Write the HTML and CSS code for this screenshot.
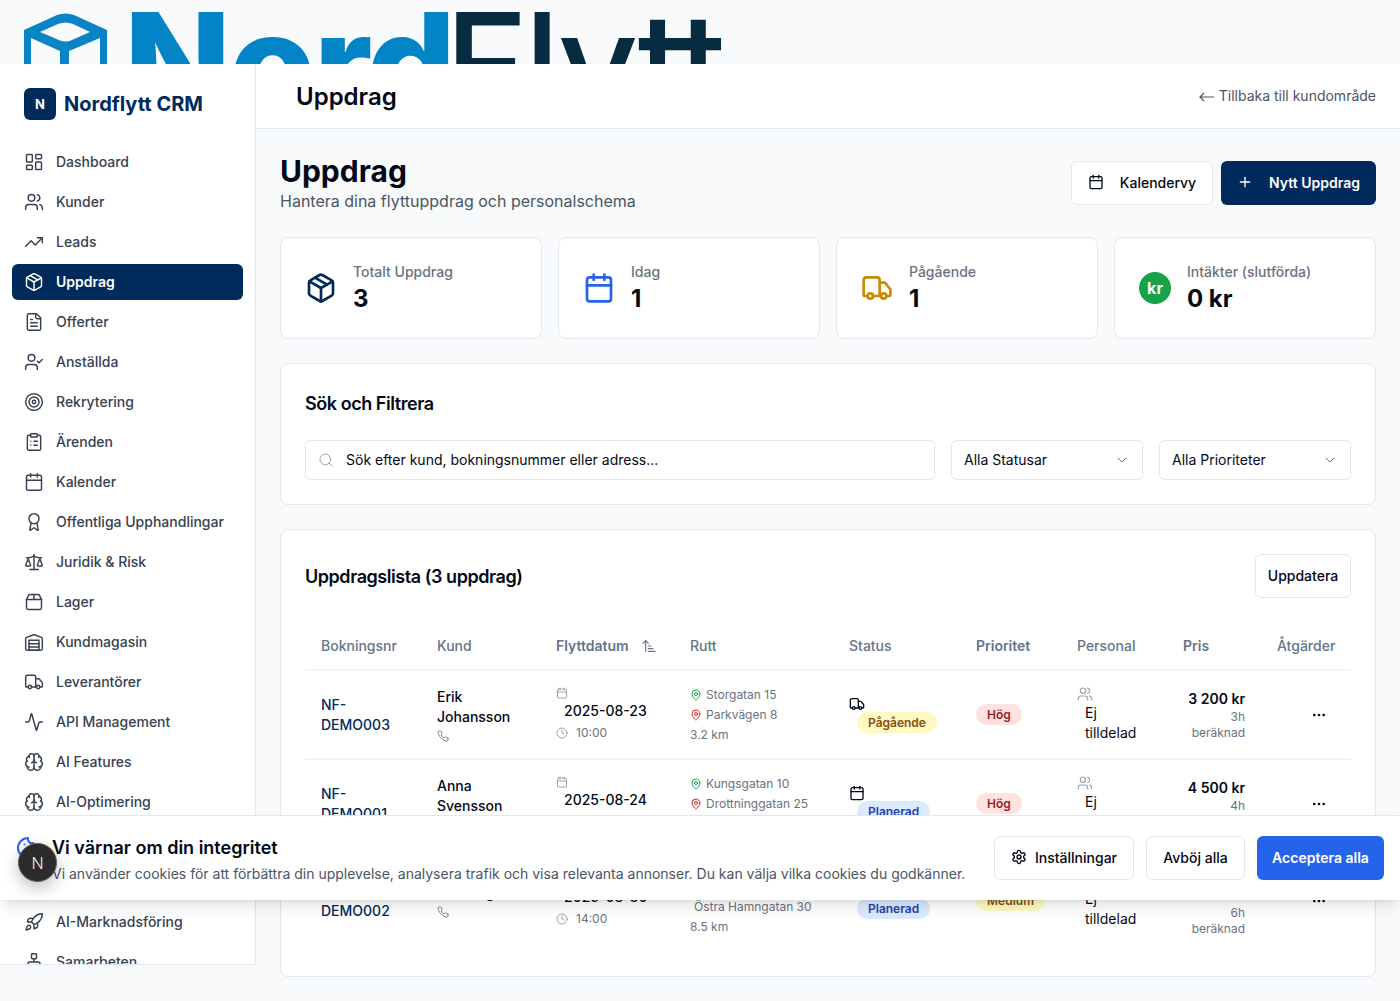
FILE: index.html
```html
<!DOCTYPE html>
<html lang="sv">
<head>
    <meta charset="UTF-8">
    <meta name="viewport" content="width=device-width, initial-scale=1.0">
    <title>Uppdrag - Nordflytt CRM</title>
    <link rel="stylesheet" href="styles.css">
</head>
<body>
    <svg class="sprite" xmlns="http://www.w3.org/2000/svg">
        <symbol id="i-dashboard" viewBox="0 0 24 24"><rect x="3" y="3" width="7" height="9" rx="1"/><rect x="14" y="3" width="7" height="5" rx="1"/><rect x="14" y="12" width="7" height="9" rx="1"/><rect x="3" y="16" width="7" height="5" rx="1"/></symbol>
        <symbol id="i-users" viewBox="0 0 24 24"><path d="M16 21v-2a4 4 0 0 0-4-4H6a4 4 0 0 0-4 4v2"/><circle cx="9" cy="7" r="4"/><path d="M22 21v-2a4 4 0 0 0-3-3.87"/><path d="M16 3.13a4 4 0 0 1 0 7.75"/></symbol>
        <symbol id="i-trend" viewBox="0 0 24 24"><polyline points="22 7 13.5 15.5 8.5 10.5 2 17"/><polyline points="16 7 22 7 22 13"/></symbol>
        <symbol id="i-package" viewBox="0 0 24 24"><path d="m7.5 4.27 9 5.15"/><path d="M21 8a2 2 0 0 0-1-1.73l-7-4a2 2 0 0 0-2 0l-7 4A2 2 0 0 0 3 8v8a2 2 0 0 0 1 1.73l7 4a2 2 0 0 0 2 0l7-4A2 2 0 0 0 21 16Z"/><path d="m3.3 7 8.7 5 8.7-5"/><path d="M12 22V12"/></symbol>
        <symbol id="i-file" viewBox="0 0 24 24"><path d="M15 2H6a2 2 0 0 0-2 2v16a2 2 0 0 0 2 2h12a2 2 0 0 0 2-2V7Z"/><path d="M14 2v4a2 2 0 0 0 2 2h4"/><path d="M10 9H8"/><path d="M16 13H8"/><path d="M16 17H8"/></symbol>
        <symbol id="i-usercheck" viewBox="0 0 24 24"><path d="M16 21v-2a4 4 0 0 0-4-4H6a4 4 0 0 0-4 4v2"/><circle cx="9" cy="7" r="4"/><polyline points="16 11 18 13 22 9"/></symbol>
        <symbol id="i-target" viewBox="0 0 24 24"><circle cx="12" cy="12" r="10"/><circle cx="12" cy="12" r="6"/><circle cx="12" cy="12" r="2"/></symbol>
        <symbol id="i-clipboard" viewBox="0 0 24 24"><rect x="8" y="2" width="8" height="4" rx="1"/><path d="M16 4h2a2 2 0 0 1 2 2v14a2 2 0 0 1-2 2H6a2 2 0 0 1-2-2V6a2 2 0 0 1 2-2h2"/><path d="M12 11h4"/><path d="M12 16h4"/><path d="M8 11h.01"/><path d="M8 16h.01"/></symbol>
        <symbol id="i-calendar" viewBox="0 0 24 24"><path d="M8 2v4"/><path d="M16 2v4"/><rect x="3" y="4" width="18" height="18" rx="2"/><path d="M3 10h18"/></symbol>
        <symbol id="i-award" viewBox="0 0 24 24"><path d="m15.477 12.89 1.515 8.526a.5.5 0 0 1-.81.47l-3.58-2.687a1 1 0 0 0-1.197 0l-3.586 2.686a.5.5 0 0 1-.81-.469l1.514-8.526"/><circle cx="12" cy="8" r="6"/></symbol>
        <symbol id="i-scale" viewBox="0 0 24 24"><path d="m16 16 3-8 3 8c-.87.65-1.92 1-3 1s-2.13-.35-3-1Z"/><path d="m2 16 3-8 3 8c-.87.65-1.92 1-3 1s-2.13-.35-3-1Z"/><path d="M7 21h10"/><path d="M12 3v18"/><path d="M3 7h2c2 0 5-1 7-2 2 1 5 2 7 2h2"/></symbol>
        <symbol id="i-box" viewBox="0 0 24 24"><path d="M3 9h18v10a2 2 0 0 1-2 2H5a2 2 0 0 1-2-2V9Z"/><path d="m3 9 2.45-4.9A2 2 0 0 1 7.24 3h9.52a2 2 0 0 1 1.8 1.1L21 9"/><path d="M12 3v6"/></symbol>
        <symbol id="i-warehouse" viewBox="0 0 24 24"><path d="M22 8.35V20a2 2 0 0 1-2 2H4a2 2 0 0 1-2-2V8.35A2 2 0 0 1 3.26 6.5l8-3.2a2 2 0 0 1 1.48 0l8 3.2A2 2 0 0 1 22 8.35Z"/><path d="M6 18h12"/><path d="M6 14h12"/><rect x="6" y="10" width="12" height="12"/></symbol>
        <symbol id="i-truck" viewBox="0 0 24 24"><path d="M14 18V6a2 2 0 0 0-2-2H4a2 2 0 0 0-2 2v11a1 1 0 0 0 1 1h2"/><path d="M15 18H9"/><path d="M19 18h2a1 1 0 0 0 1-1v-3.65a1 1 0 0 0-.22-.624l-3.48-4.35A1 1 0 0 0 17.52 8H14"/><circle cx="17" cy="18" r="2"/><circle cx="7" cy="18" r="2"/></symbol>
        <symbol id="i-activity" viewBox="0 0 24 24"><path d="M22 12h-2.48a2 2 0 0 0-1.93 1.46l-2.35 8.36a.25.25 0 0 1-.48 0L9.24 2.18a.25.25 0 0 0-.48 0l-2.35 8.36A2 2 0 0 1 4.49 12H2"/></symbol>
        <symbol id="i-brain" viewBox="0 0 24 24"><path d="M12 18V5"/><path d="M15 13a4.17 4.17 0 0 1-3-4 4.17 4.17 0 0 1-3 4"/><path d="M17.598 6.5A3 3 0 1 0 12 5a3 3 0 1 0-5.598 1.5"/><path d="M17.997 5.125a4 4 0 0 1 2.526 5.77"/><path d="M18 18a4 4 0 0 0 2-7.464"/><path d="M19.967 17.483A4 4 0 1 1 12 18a4 4 0 1 1-7.967-.517"/><path d="M6 18a4 4 0 0 1-2-7.464"/><path d="M6.003 5.125a4 4 0 0 0-2.526 5.77"/></symbol>
        <symbol id="i-rocket" viewBox="0 0 24 24"><path d="M4.5 16.5c-1.5 1.26-2 5-2 5s3.74-.5 5-2c.71-.84.7-2.13-.09-2.91a2.18 2.18 0 0 0-2.91-.09z"/><path d="m12 15-3-3a22 22 0 0 1 2-3.95A12.88 12.88 0 0 1 22 2c0 2.72-.78 7.5-6 11a22.35 22.35 0 0 1-4 2z"/><path d="M9 12H4s.55-3.03 2-4c1.62-1.08 5 0 5 0"/><path d="M12 15v5s3.03-.55 4-2c1.08-1.62 0-5 0-5"/></symbol>
        <symbol id="i-network" viewBox="0 0 24 24"><rect x="16" y="16" width="6" height="6" rx="1"/><rect x="2" y="16" width="6" height="6" rx="1"/><rect x="9" y="2" width="6" height="6" rx="1"/><path d="M5 16v-3a1 1 0 0 1 1-1h12a1 1 0 0 1 1 1v3"/><path d="M12 12V8"/></symbol>
        <symbol id="i-pin" viewBox="0 0 24 24"><path d="M20 10c0 4.993-5.539 10.193-7.399 11.799a1 1 0 0 1-1.202 0C9.539 20.193 4 14.993 4 10a8 8 0 0 1 16 0"/><circle cx="12" cy="10" r="3"/></symbol>
        <symbol id="i-clock" viewBox="0 0 24 24"><circle cx="12" cy="12" r="10"/><polyline points="12 6 12 12 16 14"/></symbol>
        <symbol id="i-phone" viewBox="0 0 24 24"><path d="M22 16.92v3a2 2 0 0 1-2.18 2 19.79 19.79 0 0 1-8.63-3.07 19.5 19.5 0 0 1-6-6 19.79 19.79 0 0 1-3.07-8.67A2 2 0 0 1 4.11 2h3a2 2 0 0 1 2 1.72 12.84 12.84 0 0 0 .7 2.81 2 2 0 0 1-.45 2.11L8.09 9.91a16 16 0 0 0 6 6l1.27-1.27a2 2 0 0 1 2.11-.45 12.84 12.84 0 0 0 2.81.7A2 2 0 0 1 22 16.92z"/></symbol>
        <symbol id="i-search" viewBox="0 0 24 24"><circle cx="11" cy="11" r="8"/><path d="m21 21-4.3-4.3"/></symbol>
        <symbol id="i-chevron" viewBox="0 0 24 24"><path d="m6 9 6 6 6-6"/></symbol>
        <symbol id="i-plus" viewBox="0 0 24 24"><path d="M5 12h14"/><path d="M12 5v14"/></symbol>
        <symbol id="i-sort" viewBox="0 0 24 24"><path d="m3 8 4-4 4 4"/><path d="M7 4v16"/><path d="M11 12h4"/><path d="M11 16h7"/><path d="M11 20h10"/></symbol>
        <symbol id="i-dots" viewBox="0 0 24 24"><circle cx="12" cy="12" r="1"/><circle cx="19" cy="12" r="1"/><circle cx="5" cy="12" r="1"/></symbol>
        <symbol id="i-gear" viewBox="0 0 24 24"><path d="M12.22 2h-.44a2 2 0 0 0-2 2v.18a2 2 0 0 1-1 1.73l-.43.25a2 2 0 0 1-2 0l-.15-.08a2 2 0 0 0-2.73.73l-.22.38a2 2 0 0 0 .73 2.73l.15.1a2 2 0 0 1 1 1.72v.51a2 2 0 0 1-1 1.74l-.15.09a2 2 0 0 0-.73 2.73l.22.38a2 2 0 0 0 2.73.73l.15-.08a2 2 0 0 1 2 0l.43.25a2 2 0 0 1 1 1.73V20a2 2 0 0 0 2 2h.44a2 2 0 0 0 2-2v-.18a2 2 0 0 1 1-1.73l.43-.25a2 2 0 0 1 2 0l.15.08a2 2 0 0 0 2.73-.73l.22-.39a2 2 0 0 0-.73-2.73l-.15-.08a2 2 0 0 1-1-1.74v-.5a2 2 0 0 1 1-1.74l.15-.09a2 2 0 0 0 .73-2.73l-.22-.38a2 2 0 0 0-2.73-.73l-.15.08a2 2 0 0 1-2 0l-.43-.25a2 2 0 0 1-1-1.73V4a2 2 0 0 0-2-2z"/><circle cx="12" cy="12" r="3"/></symbol>
        <symbol id="i-cookie" viewBox="0 0 24 24"><path d="M12 2a10 10 0 1 0 10 10 4 4 0 0 1-5-5 4 4 0 0 1-5-5"/><path d="M8.5 8.5v.01"/><path d="M16 15.5v.01"/><path d="M12 12v.01"/></symbol>
    </svg>

    <div class="brand-strip">
        <svg class="brand-cube" viewBox="0 0 83 60">
            <path fill-rule="evenodd" d="M0 17 33 2Q41.5-1 50 2L83 17V60H76V25L45 38V60H36V38L7 25V60H0ZM16 19 34 11Q41.5 8 49 11L66 19 48 27Q41.5 30 35 27Z"/>
        </svg>
        <span class="brand-word"><span class="brand-nord">Nord</span><span class="brand-flytt">Flytt</span></span>
    </div>

    <div class="app">
        <aside class="sidebar">
            <div class="side-logo">
                <span class="side-mark">N</span>
                <span class="side-name">Nordflytt CRM</span>
            </div>
            <nav class="side-nav">
                <a class="nav-item"><svg class="ico"><use href="#i-dashboard"/></svg>Dashboard</a>
                <a class="nav-item"><svg class="ico"><use href="#i-users"/></svg>Kunder</a>
                <a class="nav-item"><svg class="ico"><use href="#i-trend"/></svg>Leads</a>
                <a class="nav-item active"><svg class="ico"><use href="#i-package"/></svg>Uppdrag</a>
                <a class="nav-item"><svg class="ico"><use href="#i-file"/></svg>Offerter</a>
                <a class="nav-item"><svg class="ico"><use href="#i-usercheck"/></svg>Anställda</a>
                <a class="nav-item"><svg class="ico"><use href="#i-target"/></svg>Rekrytering</a>
                <a class="nav-item"><svg class="ico"><use href="#i-clipboard"/></svg>Ärenden</a>
                <a class="nav-item"><svg class="ico"><use href="#i-calendar"/></svg>Kalender</a>
                <a class="nav-item"><svg class="ico"><use href="#i-award"/></svg>Offentliga Upphandlingar</a>
                <a class="nav-item"><svg class="ico"><use href="#i-scale"/></svg>Juridik &amp; Risk</a>
                <a class="nav-item"><svg class="ico"><use href="#i-box"/></svg>Lager</a>
                <a class="nav-item"><svg class="ico"><use href="#i-warehouse"/></svg>Kundmagasin</a>
                <a class="nav-item"><svg class="ico"><use href="#i-truck"/></svg>Leverantörer</a>
                <a class="nav-item"><svg class="ico"><use href="#i-activity"/></svg>API Management</a>
                <a class="nav-item"><svg class="ico"><use href="#i-brain"/></svg>AI Features</a>
                <a class="nav-item"><svg class="ico"><use href="#i-brain"/></svg>AI-Optimering</a>
                <a class="nav-item"><svg class="ico"><use href="#i-brain"/></svg>AI-Kundtjänst</a>
                <a class="nav-item"><svg class="ico"><use href="#i-target"/></svg>AI-Analys</a>
                <a class="nav-item"><svg class="ico"><use href="#i-rocket"/></svg>AI-Marknadsföring</a>
                <a class="nav-item"><svg class="ico"><use href="#i-network"/></svg>Samarbeten</a>
            </nav>
        </aside>

        <div class="main">
            <header class="topbar">
                <h2 class="topbar-title">Uppdrag</h2>
                <a class="back-link"><svg class="back-arrow" viewBox="0 0 15 10"><path d="M15 5H1M5 1 1 5l4 4"/></svg>Tillbaka till kundområde</a>
            </header>

            <main class="content">
                <div class="page-head">
                    <div>
                        <h1 class="page-title">Uppdrag</h1>
                        <p class="page-sub">Hantera dina flyttuppdrag och personalschema</p>
                    </div>
                    <div class="page-actions">
                        <button class="btn btn-outline btn-kal"><svg class="ico"><use href="#i-calendar"/></svg>Kalendervy</button>
                        <button class="btn btn-dark"><svg class="ico"><use href="#i-plus"/></svg>Nytt Uppdrag</button>
                    </div>
                </div>

                <section class="stats">
                    <div class="card stat">
                        <svg class="ico stat-ico c-navy"><use href="#i-package"/></svg>
                        <div><p class="stat-label">Totalt Uppdrag</p><p class="stat-value">3</p></div>
                    </div>
                    <div class="card stat">
                        <svg class="ico stat-ico c-blue"><use href="#i-calendar"/></svg>
                        <div><p class="stat-label">Idag</p><p class="stat-value">1</p></div>
                    </div>
                    <div class="card stat">
                        <svg class="ico stat-ico c-amber"><use href="#i-truck"/></svg>
                        <div><p class="stat-label">Pågående</p><p class="stat-value">1</p></div>
                    </div>
                    <div class="card stat">
                        <span class="kr-badge">kr</span>
                        <div><p class="stat-label">Intäkter (slutförda)</p><p class="stat-value">0 kr</p></div>
                    </div>
                </section>

                <section class="card filters">
                    <h3 class="card-title">Sök och Filtrera</h3>
                    <div class="filter-row">
                        <div class="field field-search"><svg class="ico"><use href="#i-search"/></svg><span>Sök efter kund, bokningsnummer eller adress...</span></div>
                        <div class="field field-select"><span>Alla Statusar</span><svg class="ico"><use href="#i-chevron"/></svg></div>
                        <div class="field field-select"><span>Alla Prioriteter</span><svg class="ico"><use href="#i-chevron"/></svg></div>
                    </div>
                </section>

                <section class="card list">
                    <div class="list-head">
                        <h3 class="card-title">Uppdragslista (3 uppdrag)</h3>
                        <button class="btn btn-outline btn-refresh">Uppdatera</button>
                    </div>
                    <table class="jobs">
                        <colgroup>
                            <col class="w-nr"><col class="w-kund"><col class="w-datum"><col class="w-rutt"><col class="w-status"><col class="w-prio"><col class="w-pers"><col class="w-pris"><col class="w-atg">
                        </colgroup>
                        <thead>
                            <tr>
                                <th>Bokningsnr</th>
                                <th>Kund</th>
                                <th class="th-sort">Flyttdatum<svg class="ico sort-ico"><use href="#i-sort"/></svg></th>
                                <th>Rutt</th>
                                <th>Status</th>
                                <th class="th-sort">Prioritet</th>
                                <th>Personal</th>
                                <th class="th-sort">Pris</th>
                                <th>Åtgärder</th>
                            </tr>
                        </thead>
                        <tbody>
                            <tr>
                                <td class="job-nr">NF-DEMO003</td>
                                <td class="job-kund">Erik Johansson<svg class="ico mini"><use href="#i-phone"/></svg></td>
                                <td class="job-datum"><svg class="ico mini"><use href="#i-calendar"/></svg><span class="date">2025-08-23</span><span class="time"><svg class="ico mini"><use href="#i-clock"/></svg>10:00</span></td>
                                <td class="job-rutt"><span class="stop"><svg class="ico mini"><use href="#i-pin"/></svg>Storgatan 15</span><span class="stop"><svg class="ico mini"><use href="#i-pin"/></svg>Parkvägen 8</span><span>3.2 km</span></td>
                                <td><svg class="ico st-ico"><use href="#i-truck"/></svg><span class="pill pill-yellow">Pågående</span></td>
                                <td><span class="pill pill-red">Hög</span></td>
                                <td class="job-pers"><svg class="ico pers-ico"><use href="#i-users"/></svg><span>Ej tilldelad</span></td>
                                <td class="job-pris"><b>3 200 kr</b><span>3h beräknad</span></td>
                                <td class="job-atg"><svg class="ico"><use href="#i-dots"/></svg></td>
                            </tr>
                            <tr>
                                <td class="job-nr">NF-DEMO001</td>
                                <td class="job-kund">Anna Svensson<svg class="ico mini"><use href="#i-phone"/></svg></td>
                                <td class="job-datum"><svg class="ico mini"><use href="#i-calendar"/></svg><span class="date">2025-08-24</span><span class="time"><svg class="ico mini"><use href="#i-clock"/></svg>09:00</span></td>
                                <td class="job-rutt"><span class="stop"><svg class="ico mini"><use href="#i-pin"/></svg>Kungsgatan 10</span><span class="stop"><svg class="ico mini"><use href="#i-pin"/></svg>Drottninggatan 25</span><span>5.4 km</span></td>
                                <td><svg class="ico st-ico"><use href="#i-calendar"/></svg><span class="pill pill-blue">Planerad</span></td>
                                <td><span class="pill pill-red">Hög</span></td>
                                <td class="job-pers"><svg class="ico pers-ico"><use href="#i-users"/></svg><span>Ej tilldelad</span></td>
                                <td class="job-pris"><b>4 500 kr</b><span>4h beräknad</span></td>
                                <td class="job-atg"><svg class="ico"><use href="#i-dots"/></svg></td>
                            </tr>
                            <tr class="row-tall">
                                <td class="job-nr">NF-DEMO002</td>
                                <td class="job-kund">Per Berg<svg class="ico mini"><use href="#i-phone"/></svg></td>
                                <td class="job-datum"><svg class="ico mini"><use href="#i-calendar"/></svg><span class="date">2025-08-30</span><span class="time"><svg class="ico mini"><use href="#i-clock"/></svg>14:00</span></td>
                                <td class="job-rutt"><span class="stop"><svg class="ico mini"><use href="#i-pin"/></svg>Södermalm 12</span><span class="stop stop-wrap"><svg class="ico mini"><use href="#i-pin"/></svg><span>Östra Hamngatan 30</span></span><span>8.5 km</span></td>
                                <td><svg class="ico st-ico"><use href="#i-calendar"/></svg><span class="pill pill-blue">Planerad</span></td>
                                <td><span class="pill pill-yellow">Medium</span></td>
                                <td class="job-pers"><svg class="ico pers-ico"><use href="#i-users"/></svg><span>Ej tilldelad</span></td>
                                <td class="job-pris"><b>12 800 kr</b><span>6h beräknad</span></td>
                                <td class="job-atg"><svg class="ico"><use href="#i-dots"/></svg></td>
                            </tr>
                        </tbody>
                    </table>
                </section>
            </main>
        </div>
    </div>

    <!-- cookie banner and dev badge sit over the page -->
    <div class="cookie">
        <svg class="ico cookie-ico"><use href="#i-cookie"/></svg>
        <div class="cookie-text">
            <h3 class="cookie-title">Vi värnar om din integritet</h3>
            <p class="cookie-sub">Vi använder cookies för att förbättra din upplevelse, analysera trafik och visa relevanta annonser. Du kan välja vilka cookies du godkänner.</p>
        </div>
        <div class="cookie-actions">
            <button class="btn btn-outline btn-settings"><svg class="ico"><use href="#i-gear"/></svg>Inställningar</button>
            <button class="btn btn-outline btn-deny">Avböj alla</button>
            <button class="btn btn-accept">Acceptera alla</button>
        </div>
    </div>
    <div class="dev-badge">N</div>
</body>
</html>
```

FILE: styles.css
```css
* {
    box-sizing: border-box;
}
html, body {
    margin: 0;
    height: 1001px;
    overflow: hidden;
}
body {
    font-family: Inter, "Liberation Sans", sans-serif;
    font-size: 14px;
    line-height: 20px;
    background-color: #f8fafc;
    color: #020817;
    position: relative;
}
h1, h2, h3, p {
    margin: 0;
}
.sprite {
    display: none;
}
.ico {
    width: 20px;
    height: 20px;
    fill: none;
    stroke: currentColor;
    stroke-width: 2;
    stroke-linecap: round;
    stroke-linejoin: round;
    flex-shrink: 0;
}

/* big logo, cut off by the app */
.brand-strip {
    height: 64px;
    overflow: hidden;
    display: flex;
    padding: 13px 0 0 24px;
    gap: 17px;
}
.brand-cube {
    width: 83px;
    height: 60px;
    flex-shrink: 0;
    fill: #0b84c6;
}
.brand-word {
    font-size: 140px;
    line-height: 100px;
    white-space: nowrap;
    letter-spacing: -2px;
}
.brand-nord {
    color: #0284c7;
    font-weight: 800;
}
.brand-flytt {
    color: #072b40;
    font-weight: 500;
    letter-spacing: -3px;
    margin-left: -9px;
}

.app {
    display: flex;
    height: 937px;
}

/* sidebar */
.sidebar {
    width: 256px;
    height: 901px;
    flex-shrink: 0;
    background-color: #fff;
    border-right: 1px solid #e2e8f0;
    border-bottom: 1px solid #e2e8f0;
    overflow: hidden;
}
.side-logo {
    display: flex;
    align-items: center;
    gap: 8px;
    padding: 24px;
}
.side-mark {
    width: 32px;
    height: 32px;
    border-radius: 6px;
    background-color: #002a5c;
    color: #fff;
    font-size: 13px;
    font-weight: 700;
    display: flex;
    align-items: center;
    justify-content: center;
}
.side-name {
    font-size: 20px;
    line-height: 28px;
    font-weight: 700;
    color: #002a5c;
}
.side-nav {
    display: flex;
    flex-direction: column;
    gap: 4px;
    padding: 0 12px;
}
.nav-item {
    display: flex;
    align-items: center;
    gap: 12px;
    height: 36px;
    padding: 0 12px;
    border-radius: 6px;
    font-weight: 500;
    color: #374151;
    flex-shrink: 0;
}
.nav-item .ico {
    stroke-width: 1.75;
}
.nav-item.active {
    background-color: #002a5c;
    color: #fff;
    font-weight: 600;
}

/* main column */
.main {
    flex: 1;
    min-width: 0;
}
.topbar {
    height: 65px;
    background-color: #fff;
    border-bottom: 1px solid #e2e8f0;
    display: flex;
    align-items: center;
    justify-content: space-between;
    padding: 0 24px 0 40px;
}
.topbar-title {
    font-size: 24px;
    line-height: 32px;
    font-weight: 600;
    margin-top: 2px;
}
.back-link {
    color: #4b5563;
    display: flex;
    align-items: center;
    gap: 5px;
}
.back-arrow {
    width: 15px;
    height: 10px;
    margin-top: 2px;
    fill: none;
    stroke: currentColor;
    stroke-width: 1.2;
}
.content {
    padding: 24px;
    display: flex;
    flex-direction: column;
    gap: 24px;
}
.page-head {
    display: flex;
    justify-content: space-between;
    align-items: flex-start;
    height: 60px;
}
.page-title {
    font-size: 30px;
    line-height: 36px;
    font-weight: 700;
}
.page-sub {
    font-size: 16px;
    line-height: 24px;
    color: #4b5563;
}
.page-actions {
    display: flex;
    gap: 8px;
    margin-top: 8px;
}

/* buttons */
.btn {
    font-family: inherit;
    font-size: 14px;
    font-weight: 500;
    height: 44px;
    padding: 0 0 2px;
    border-radius: 6px;
    display: inline-flex;
    align-items: center;
    justify-content: center;
    border: 1px solid transparent;
    cursor: pointer;
    color: #020817;
}
.btn .ico {
    width: 16px;
    height: 16px;
}
.btn-outline {
    background-color: #fff;
    border-color: #e2e8f0;
}
.btn-dark {
    background-color: #002a5c;
    color: #fff;
    font-weight: 600;
}
.btn-kal {
    width: 142px;
    gap: 16px;
}
.btn-dark {
    width: 155px;
    gap: 16px;
}
.btn-refresh {
    width: 96px;
}
.btn-settings {
    width: 140px;
    gap: 8px;
}
.btn-deny {
    width: 99px;
}
.btn-accept {
    width: 127px;
    background-color: #2563eb;
    color: #fff;
    font-weight: 600;
}

/* cards */
.card {
    background-color: #fff;
    border: 1px solid #e2e8f0;
    border-radius: 8px;
}
.card-title {
    font-size: 18px;
    line-height: 28px;
    font-weight: 600;
    letter-spacing: -0.45px;
    padding-top: 1px;
}
.stats {
    display: grid;
    grid-template-columns: repeat(4, 1fr);
    gap: 16px;
}
.stat {
    height: 102px;
    display: flex;
    align-items: center;
    gap: 16px;
    padding: 0 24px;
}
.stat-ico {
    width: 32px;
    height: 32px;
}
.stat-label {
    font-weight: 500;
    color: #6b7280;
}
.stat-value {
    font-size: 24px;
    line-height: 32px;
    font-weight: 700;
    margin-top: 1px;
}
.c-navy { color: #002a5c; }
.c-blue { color: #2563eb; }
.c-amber { color: #ca8a04; }
.kr-badge {
    width: 32px;
    height: 32px;
    border-radius: 50%;
    background-color: #16a34a;
    color: #fff;
    font-size: 16px;
    font-weight: 700;
    display: flex;
    align-items: center;
    justify-content: center;
}

/* filters */
.filters {
    height: 142px;
    padding: 25px 24px 0;
}
.filter-row {
    display: flex;
    gap: 16px;
    margin-top: 22px;
}
.field {
    height: 40px;
    background-color: #fff;
    border: 1px solid #e2e8f0;
    border-radius: 6px;
    display: flex;
    align-items: center;
    padding: 0 12px;
}
.field-search {
    width: 630px;
    gap: 12px;
    flex-shrink: 0;
}
.field-search .ico {
    width: 16px;
    height: 16px;
    stroke-width: 1.5;
    color: #9ca3af;
}
.field-select {
    flex: 1;
    justify-content: space-between;
}
.field-select .ico {
    width: 16px;
    height: 16px;
    color: #6b7280;
    stroke-width: 1.5;
}

/* job table */
.list {
    padding: 24px;
    height: 448px;
}
.list-head {
    display: flex;
    align-items: center;
    justify-content: space-between;
    height: 44px;
    margin-bottom: 24px;
}
.jobs {
    width: 100%;
    table-layout: fixed;
    border-collapse: collapse;
}
.w-nr { width: 116px; }
.w-kund { width: 119px; }
.w-datum { width: 134px; }
.w-rutt { width: 159px; }
.w-status { width: 127px; }
.w-prio { width: 101px; }
.w-pers { width: 106px; }
.w-pris { width: 94px; }
.w-atg { width: 90px; }
.jobs th {
    height: 48px;
    padding: 0 16px;
    text-align: left;
    font-weight: 500;
    color: #64748b;
    white-space: nowrap;
    border-bottom: 2px solid #f1f5f9;
}
.jobs .th-sort {
    font-weight: 600;
}
.sort-ico {
    width: 16px;
    height: 16px;
    stroke-width: 1.75;
    margin-left: 12px;
    vertical-align: -3px;
}
.jobs td {
    height: 89px;
    padding: 8px 16px;
    vertical-align: middle;
    border-bottom: 2px solid #f1f5f9;
}
.jobs .row-tall td {
    height: 104px;
    border-bottom: 0;
}
.job-nr {
    color: #002a5c;
    font-weight: 500;
}
.job-kund {
    font-weight: 500;
}
.mini {
    width: 12px;
    height: 12px;
    color: #9ca3af;
    display: block;
}
.job-kund .mini {
    margin-top: 3px;
    color: #6b7280;
    stroke-width: 1.75;
}
.job-datum .mini {
    margin-bottom: 2px;
}
.date {
    display: block;
    font-weight: 500;
    padding-left: 8px;
}
.time {
    display: flex;
    align-items: center;
    gap: 8px;
    font-size: 12px;
    color: #6b7280;
    margin-top: 2px;
}
.time .mini {
    margin-bottom: 0;
}
.job-rutt {
    font-size: 12px;
    color: #6b7280;
}
.job-rutt span {
    display: block;
}
.job-rutt .stop {
    display: flex;
    align-items: center;
    gap: 0 4px;
}
.job-rutt .stop-wrap {
    flex-wrap: wrap;
}
.stop-wrap span {
    padding-left: 4px;
}
.job-rutt .stop .mini {
    color: #16a34a;
}
.job-rutt .stop + .stop .mini {
    color: #dc2626;
}
.st-ico {
    width: 16px;
    height: 16px;
    display: block;
}
.pill {
    display: inline-block;
    padding: 0 11px;
    border-radius: 999px;
    font-size: 12px;
    line-height: 21px;
    font-weight: 600;
}
td .st-ico + .pill {
    margin-left: 8px;
}
.pill-yellow {
    background-color: #fef9c3;
    color: #854d0e;
}
.pill-red {
    background-color: #fee2e2;
    color: #991b1b;
}
.pill-blue {
    background-color: #dbeafe;
    color: #1e40af;
}
.pers-ico {
    width: 16px;
    height: 16px;
    stroke-width: 1.75;
    color: #9ca3af;
    display: block;
    margin-bottom: 1px;
}
.job-pers span {
    display: block;
    padding-left: 8px;
}
.job-pris {
    text-align: right;
}
.job-pris b {
    font-weight: 600;
    display: block;
}
.job-pris span {
    display: block;
    font-size: 12px;
    line-height: 16px;
    color: #6b7280;
}
.job-atg .ico {
    width: 16px;
    height: 16px;
    display: block;
    margin: 0 8px 0 auto;
}

/* cookie banner */
.cookie {
    position: absolute;
    left: 0;
    right: 0;
    top: 815px;
    height: 85px;
    background-color: #fff;
    border-top: 1px solid #e2e8f0;
    box-shadow: 0 10px 15px -3px rgba(0,0,0,.1), 0 4px 6px -4px rgba(0,0,0,.1);
    display: flex;
    align-items: center;
    padding: 0 16px;
}
.cookie-ico {
    width: 24px;
    height: 24px;
    color: #2563eb;
    margin-top: -20px;
    margin-right: 12px;
}
.cookie-title {
    font-size: 18px;
    line-height: 28px;
    font-weight: 600;
    color: #020817;
}
.cookie-sub {
    color: #4b5563;
    white-space: nowrap;
    margin-top: 2px;
}
.cookie-text {
    flex: 1;
    margin-top: 2px;
}
.cookie-actions {
    display: flex;
    gap: 12px;
}
.dev-badge {
    position: absolute;
    left: 18px;
    top: 843px;
    width: 39px;
    height: 39px;
    border-radius: 50%;
    background-color: #2b2b2b;
    border: 1px solid #5a5a5a;
    color: #e8e8e8;
    font-size: 16px;
    font-weight: 300;
    display: flex;
    align-items: center;
    justify-content: center;
    box-shadow: 0 6px 16px rgba(0,0,0,.25);
}
```
